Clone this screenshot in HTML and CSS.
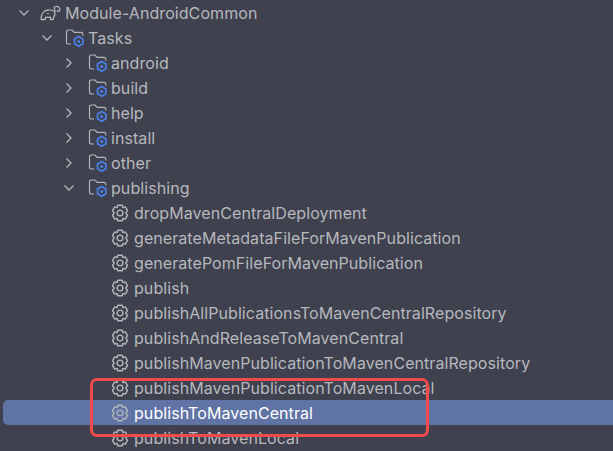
FILE: index.html
```html
<!DOCTYPE html>
<html>
<head>
  <meta charset='UTF-8'>
  <title>Gradle Tasks</title>
  <link rel="stylesheet" href="styles.css">
</head>
<body>
  <svg class='defs' width='0' height='0'>
    <symbol id='chev-down' viewBox='0 0 12 12'><path d='M1.5 3.5 6 8l4.500-4.500' fill='none' stroke='#b4b6bb' stroke-width='1.300'/></symbol>
    <symbol id='chev-right' viewBox='0 0 12 12'><path d='M3.500 1.500 8 6l-4.500 4.500' fill='none' stroke='#b4b6bb' stroke-width='1.300'/></symbol>
    <symbol id='folder' viewBox='0 0 20 20'>
      <path d='M6 16H3.200A1.700 1.700 0 0 1 1.500 14.300V3.700A1.700 1.700 0 0 1 3.200 2H7l2.200 2.300h6.800A1.800 1.800 0 0 1 17.800 6v1.500' fill='none' stroke='#b4b6bb' stroke-width='1.200'/>
      <path d='M13.700 8.500 17.900 11v4.800L13.700 18.300 9.500 15.800V11z' fill='#3f414e' stroke='#4a82ee' stroke-width='1.600'/>
      <circle cx='13.700' cy='13.400' r='1.500' fill='#4a82ee'/>
    </symbol>
    <symbol id='gear' viewBox='0 0 18 18'>
      <path d='M6.800 1.200h4.400l.7 2.300 2.400-.6 2.200 3.800L14.800 9l1.700 2.300-2.200 3.800-2.400-.6-.7 2.300H6.800l-.7-2.300-2.400.6-2.200-3.800L3.200 9 1.500 6.700l2.200-3.800 2.400.6z' fill='none' stroke='#b4b6bb' stroke-width='1.400' stroke-linejoin='round'/>
      <circle cx='9' cy='9' r='2.900' fill='none' stroke='#b4b6bb' stroke-width='1.400'/>
    </symbol>
    <symbol id='gradle' viewBox='0 0 21 16'>
      <path d='M1 14.500C1 9.500 3.500 5.500 8 5c2.800-.3 4.800.5 6.500 1.500C15.800 4.500 14 3.500 14 2.500 15 .8 18 .8 19.500 3c1 1.500 0 3.500-1.500 3.500l-1-1.200M15.200 6.500c0 3-1.200 5.500-2.200 8h-2.300l-.5-2.500c-1.400.6-2.900.6-4.200 0l-1 2.500H3.200L1 14.500' fill='none' stroke='#b4b6bb' stroke-width='1.300' stroke-linejoin='round'/>
      <circle cx='8' cy='8.500' r='.8' fill='#b4b6bb'/>
    </symbol>
  </svg>

  <div class='tree'>
    <div class='row nivel-0'><svg class='chev'><use href='#chev-down'/></svg><svg class='ico-gradle'><use href='#gradle'/></svg>Module-AndroidCommon</div>
    <div class='row nivel-1'><svg class='chev'><use href='#chev-down'/></svg><svg class='ico-folder'><use href='#folder'/></svg>Tasks</div>
    <div class='row nivel-2'><svg class='chev'><use href='#chev-right'/></svg><svg class='ico-folder'><use href='#folder'/></svg>android</div>
    <div class='row nivel-2'><svg class='chev'><use href='#chev-right'/></svg><svg class='ico-folder'><use href='#folder'/></svg>build</div>
    <div class='row nivel-2'><svg class='chev'><use href='#chev-right'/></svg><svg class='ico-folder'><use href='#folder'/></svg>help</div>
    <div class='row nivel-2'><svg class='chev'><use href='#chev-right'/></svg><svg class='ico-folder'><use href='#folder'/></svg>install</div>
    <div class='row nivel-2'><svg class='chev'><use href='#chev-right'/></svg><svg class='ico-folder'><use href='#folder'/></svg>other</div>
    <div class='row nivel-2'><svg class='chev'><use href='#chev-down'/></svg><svg class='ico-folder'><use href='#folder'/></svg>publishing</div>
    <div class='row nivel-3'><svg class='ico-gear'><use href='#gear'/></svg>dropMavenCentralDeployment</div>
    <div class='row nivel-3'><svg class='ico-gear'><use href='#gear'/></svg>generateMetadataFileForMavenPublication</div>
    <div class='row nivel-3'><svg class='ico-gear'><use href='#gear'/></svg>generatePomFileForMavenPublication</div>
    <div class='row nivel-3'><svg class='ico-gear'><use href='#gear'/></svg>publish</div>
    <div class='row nivel-3'><svg class='ico-gear'><use href='#gear'/></svg>publishAllPublicationsToMavenCentralRepository</div>
    <div class='row nivel-3'><svg class='ico-gear'><use href='#gear'/></svg>publishAndReleaseToMavenCentral</div>
    <div class='row nivel-3'><svg class='ico-gear'><use href='#gear'/></svg>publishMavenPublicationToMavenCentralRepository</div>
    <div class='row nivel-3'><svg class='ico-gear'><use href='#gear'/></svg>publishMavenPublicationToMavenLocal</div>
    <div class='row nivel-3 selected'><svg class='ico-gear'><use href='#gear'/></svg>publishToMavenCentral</div>
    <div class='row nivel-3'><svg class='ico-gear'><use href='#gear'/></svg>publishToMavenLocal</div>
  </div>

  <div class='marca'></div>
</body>
</html>
```

FILE: styles.css
```css
html, body { margin: 0; padding: 0; height: 100%; overflow: hidden; }
body { background: #3f414e; font-family: Inter, "Liberation Sans", sans-serif; font-size: 16px; letter-spacing: 0.07px; color: #b6b8bd; position: relative; }
.defs { position: absolute; }
.row { height: 25px; display: flex; align-items: center; white-space: nowrap; box-sizing: border-box; }
.nivel-0 { padding-left: 18px; }
.nivel-1 { padding-left: 41px; }
.nivel-2 { padding-left: 63px; }
.nivel-3 { padding-left: 111px; }
.chev { width: 12px; height: 12px; flex: none; }
.ico-gradle { width: 21px; height: 16px; margin: 0 4px 0 10px; flex: none; }
.ico-folder { width: 20px; height: 20px; margin: 0 3px 0 12px; flex: none; }
.nivel-2 .ico-folder { margin: 0 3px 0 13px; }
.ico-gear { width: 18px; height: 18px; margin-right: 5px; flex: none; }
.selected { background: #6073a5; color: #ffffff; margin-left: 3px; padding-left: 108px; border-radius: 5px 0 0 5px; }
.marca { position: absolute; left: 90px; top: 378px; width: 339px; height: 59px; box-sizing: border-box; border: 3px solid #f04a4c; border-radius: 7px; }
```
